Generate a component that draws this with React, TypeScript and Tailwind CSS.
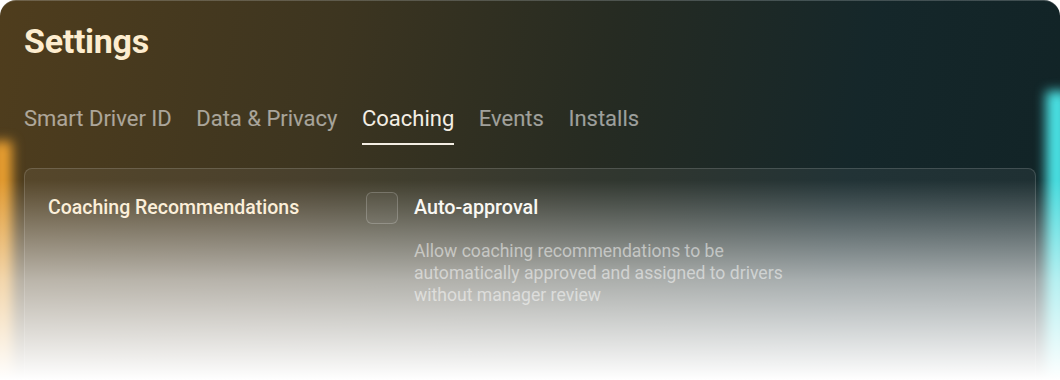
import { useState } from 'react'

const TABS = ['Smart Driver ID', 'Data & Privacy', 'Coaching', 'Events', 'Installs']

export default function App() {
  const [tab, setTab] = useState('Coaching')
  const [auto, setAuto] = useState(false)

  return (
    <div className="h-[380px] w-[1060px] overflow-hidden bg-white font-['Roboto',sans-serif]">
      <div className="relative h-full w-full overflow-hidden rounded-t-2xl border-t border-white/20 bg-[linear-gradient(100deg,#4f3d1d_0%,#3d3520_30%,#262b22_55%,#15272a_78%,#112326_100%)]">
        {/* edge glows */}
        <div className="pointer-events-none absolute -left-2 top-[140px] h-[240px] w-[20px] bg-[#eba030] blur-[6px]" />
        <div className="pointer-events-none absolute -right-2 top-[90px] h-[300px] w-[22px] bg-[#4ae2e4] blur-[6px]" />

        <div className="relative px-6 pt-5">
          <h1 className="text-[34px] font-bold leading-10 tracking-[-0.3px] text-[#fdedcf]">Settings</h1>

          <div className="mt-11 flex gap-[24.5px]">
            {TABS.map((t) => (
              <button
                key={t}
                onClick={() => setTab(t)}
                className={`border-b-2 pb-2.5 text-[22px] leading-7 ${
                  tab === t ? 'border-[#f4eee4] text-[#f4eee4]' : 'border-transparent text-white/55'
                }`}
              >
                {t}
              </button>
            ))}
          </div>

          <div className="mt-[23px] flex h-[240px] rounded-lg border border-white/15 bg-white/[0.06] px-[23px] pt-[23px]">
            <div className="w-[318px] text-[19.5px] font-medium leading-8 text-[#fbecd2]">
              Coaching Recommendations
            </div>
            <div>
              <label className="flex cursor-pointer items-center gap-4">
                <span
                  onClick={() => setAuto(!auto)}
                  className={`h-8 w-8 rounded-md border ${auto ? 'border-white/60 bg-white/30' : 'border-white/20 bg-white/[0.04]'}`}
                />
                <span className="text-[19.75px] font-medium leading-8 text-[#f8f6f0]">Auto-approval</span>
              </label>
              <p className="ml-12 mt-4 max-w-[400px] text-[17.6px] leading-[22px] text-white/50">
                Allow coaching recommendations to be automatically approved and assigned to drivers without
                manager review
              </p>
            </div>
          </div>
        </div>

        {/* bottom fade */}
        <div className="pointer-events-none absolute inset-x-0 bottom-0 h-[200px] bg-gradient-to-b from-white/0 via-white/60 to-white" />
      </div>
    </div>
  )
}
